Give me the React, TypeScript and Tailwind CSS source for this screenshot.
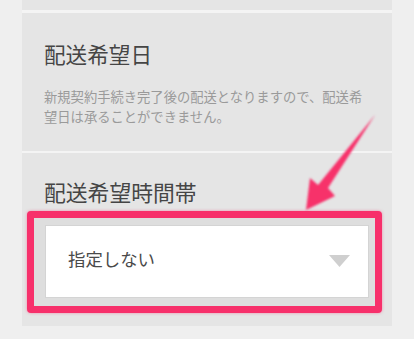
import React from 'react';

const font = { fontFamily: '"Noto Sans CJK JP", "Noto Sans", sans-serif' };

export default function App() {
  return (
    <div className="relative w-full h-[339px] overflow-hidden bg-[#efefef] px-[22px]" style={font}>
      <div className="flex flex-col">
        {/* previous section tail */}
        <div className="h-[10px] bg-[#e5e5e5]" />
        <div className="h-[3px] bg-[#f4f4f4]" />

        {/* 配送希望日 */}
        <div className="bg-[#e5e5e5] pl-[22px] pr-[20px] pt-[27px] pb-[24px]">
          <h2 className="text-[21.6px] leading-[28px] text-[#454545]">配送希望日</h2>
          <p className="mt-[19px] whitespace-nowrap text-[13.3px] leading-[20px] text-[#9a9a9a]">
            新規契約手続き完了後の配送となりますので、配送希
            <br />
            望日は承ることができません。
          </p>
        </div>
        <div className="h-[2px] bg-[#f4f4f4]" />

        {/* 配送希望時間帯 */}
        <div className="bg-[#e5e5e5] pl-[22px] pt-[24px] pb-[13px]">
          <h2 className="text-[21.8px] leading-[30px] text-[#454545]">配送希望時間帯</h2>
          <div className="mt-[4px] -ml-[17px] mr-[10px] rounded-[4px] border-[7px] border-[#f7306b] bg-[#dedede] pl-[12px] pr-[7px] pt-[8px] pb-[9px] shadow-[0_0_3px_rgba(247,48,107,0.5)]">
            <div className="flex h-[71px] items-center justify-between bg-white pl-[22px] pr-[18px] shadow-[0_0_0_1px_#d4d4d4]">
              <span className="pb-[4px] text-[17.4px] text-[#4a4a4a]">指定しない</span>
              <svg width="21" height="12" viewBox="0 0 21 12" className="mb-[2px]">
                <polygon points="0,0 21,0 10.5,12" fill="#cfcfcf" />
              </svg>
            </div>
          </div>
        </div>
      </div>

      {/* annotation arrow */}
      <svg className="pointer-events-none absolute left-0 top-0" width="414" height="339" viewBox="0 0 414 339">
        <defs>
          <filter id="soft" x="-20%" y="-20%" width="140%" height="140%">
            <feGaussianBlur stdDeviation="0.8" />
          </filter>
        </defs>
        <polygon
          points="375,115 328,188 335,196 306,210 310,178 318,185"
          fill="#f7306b"
          filter="url(#soft)"
        />
      </svg>
    </div>
  );
}
